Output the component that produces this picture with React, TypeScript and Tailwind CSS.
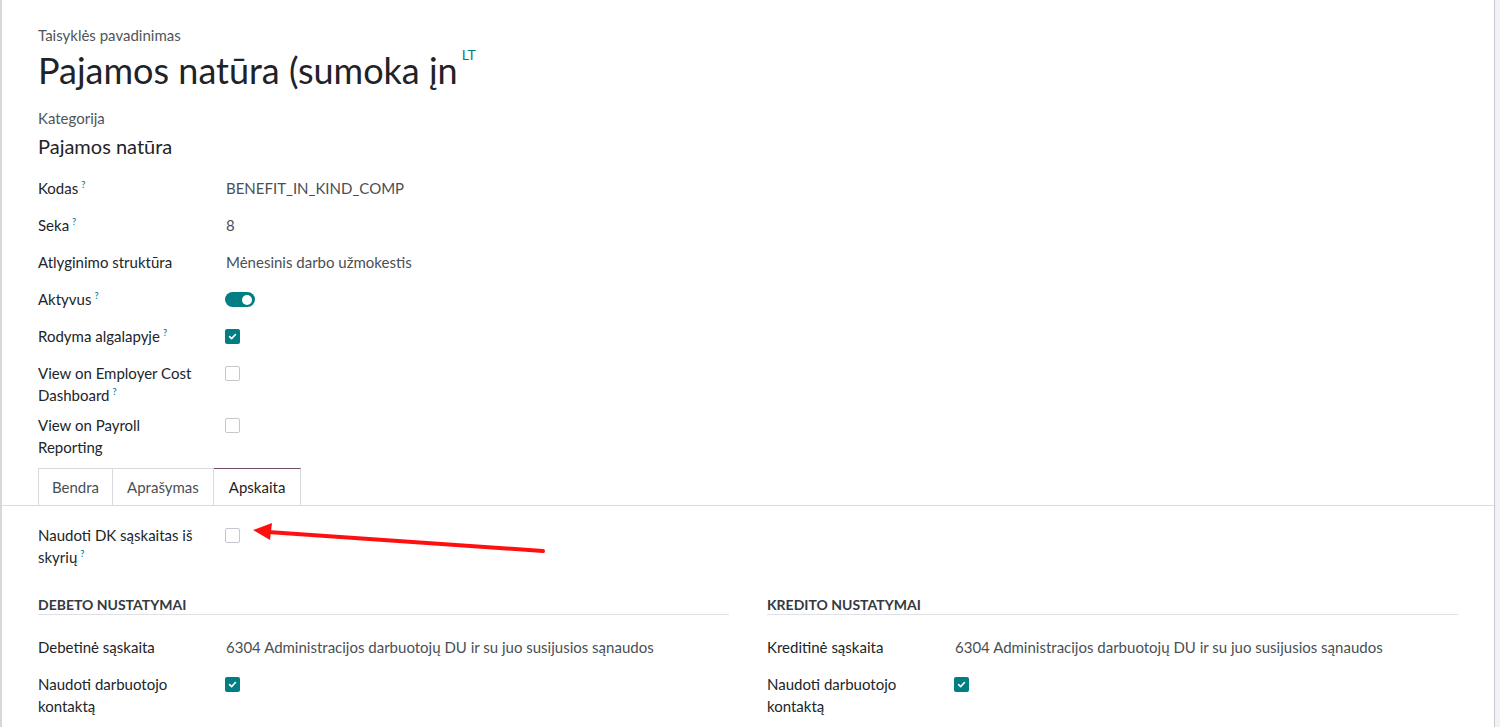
import React from 'react';

const Help = () => (
  <span className="inline-block relative top-[-6px] ml-[3px] text-[9px] leading-[9px] font-semibold text-[#0180a5]">?</span>
);

const Check = ({ checked }: { checked: boolean }) =>
  checked ? (
    <span className="inline-flex w-[15px] h-[15px] items-center justify-center rounded-[2px] bg-[#017e84]">
      <svg width="9" height="9" viewBox="0 0 10 10">
        <path d="M1.8 5.2 L4 7.3 L8.3 2.8" fill="none" stroke="#fff" strokeWidth="1.8" strokeLinecap="round" strokeLinejoin="round" />
      </svg>
    </span>
  ) : (
    <span className="inline-block w-[15px] h-[15px] rounded-[2px] border border-[#c4c7cb] bg-white" />
  );

const Toggle = () => (
  <span className="inline-flex w-[30px] h-[15px] items-center justify-end rounded-full bg-[#017e84] pr-[3px]">
    <span className="w-[10px] h-[10px] rounded-full bg-white" />
  </span>
);

const Row = ({ label, children, help }: { label: React.ReactNode; children?: React.ReactNode; help?: boolean }) => (
  <div className="flex mb-[8px] min-h-[29px]">
    <div className="w-[187px] shrink-0 pr-4 leading-[22px] text-[#212529]">
      {label}
      {help && <Help />}
    </div>
    <div className="flex-1 leading-[22px] text-[#343a40] flex items-start pt-[4px]">{children}</div>
  </div>
);

const TextRow = ({ label, value, help }: { label: string; value: string; help?: boolean }) => (
  <div className="flex mb-[8px] min-h-[29px]">
    <div className="w-[188px] shrink-0 pr-4 leading-[22px] text-[#212529]">
      {label}
      {help && <Help />}
    </div>
    <div className="flex-1 leading-[22px] text-[#4a4f55]">{value}</div>
  </div>
);

export default function App() {
  return (
    <div className="w-[1500px] h-[727px] overflow-hidden flex bg-[#f2f2f6] text-[15px]" style={{ fontFamily: 'Lato, "Noto Sans", sans-serif' }}>
      <div className="w-[1495px] h-full bg-white border-l-2 border-r border-l-[#d5d8dc] border-r-[#c6c9cf] flex flex-col relative">
        <div className="pl-[36px] pt-[25px]">
          <div className="text-[#4f555c] leading-[20px]">Taisyklės pavadinimas</div>
          <div className="flex items-start">
            <div className="text-[36px] leading-[50px] text-[#1f2327]">Pajamos natūra (sumoka įn</div>
            <div className="ml-[4px] mt-[-1px] text-[14px] text-[#017e84]">LT</div>
          </div>
          <div className="mt-[13px] text-[#4f555c] leading-[20px]">Kategorija</div>
          <div className="mt-[4px] text-[20px] leading-[28px] text-[#1f2327]">Pajamos natūra</div>
          <div className="mt-[17px]">
            <TextRow label="Kodas" help value="BENEFIT_IN_KIND_COMP" />
            <TextRow label="Seka" help value="8" />
            <TextRow label="Atlyginimo struktūra" value="Mėnesinis darbo užmokestis" />
            <Row label="Aktyvus" help>
              <Toggle />
            </Row>
            <Row label="Rodyma algalapyje" help>
              <Check checked />
            </Row>
            <Row label={<>View on Employer Cost<br />Dashboard</>} help>
              <Check checked={false} />
            </Row>
            <Row label={<>View on Payroll<br />Reporting</>}>
              <Check checked={false} />
            </Row>
          </div>
        </div>

        <div className="flex border-b border-[#d8dadd] pl-[36px] mt-[2px]">
          <div className="h-[37px] px-[13px] flex items-center border border-b-0 border-[#d8dadd] text-[#4a4f55] bg-white">Bendra</div>
          <div className="h-[37px] px-[14px] flex items-center border border-l-0 border-b-0 border-[#d8dadd] text-[#4a4f55] bg-white">Aprašymas</div>
          <div className="h-[37px] px-[15px] flex items-center border-t border-t-[#714b67] border-r border-r-[#d8dadd] text-[#1f2327] bg-white mb-[-1px]">Apskaita</div>
        </div>

        <div className="pl-[36px] pt-[18px]">
          <Row label={<>Naudoti DK sąskaitas iš<br />skyrių</>} help>
            <Check checked={false} />
          </Row>
          <div className="grid grid-cols-2 gap-x-[38px] pr-[36px] mt-[29px]">
            {[
              { head: 'DEBETO NUSTATYMAI', label: 'Debetinė sąskaita' },
              { head: 'KREDITO NUSTATYMAI', label: 'Kreditinė sąskaita' },
            ].map(s => (
              <div key={s.head}>
                <div className="text-[14px] font-bold text-[#343a40] leading-[16px] pb-[1px] border-b border-[#dee2e6]">{s.head}</div>
                <div className="mt-[21px]">
                  <TextRow label={s.label} value="6304 Administracijos darbuotojų DU ir su juo susijusios sąnaudos" />
                  <Row label={<>Naudoti darbuotojo<br />kontaktą</>}>
                    <Check checked />
                  </Row>
                </div>
              </div>
            ))}
          </div>
        </div>

        <svg className="absolute left-[248px] top-[522px]" width="300" height="36" viewBox="0 0 300 36">
          <line x1="293" y1="29" x2="18" y2="10" stroke="#ff1010" strokeWidth="4" strokeLinecap="round" />
          <polygon points="3,8 22,1 20,18" fill="#ff1010" />
        </svg>
      </div>
    </div>
  );
}
